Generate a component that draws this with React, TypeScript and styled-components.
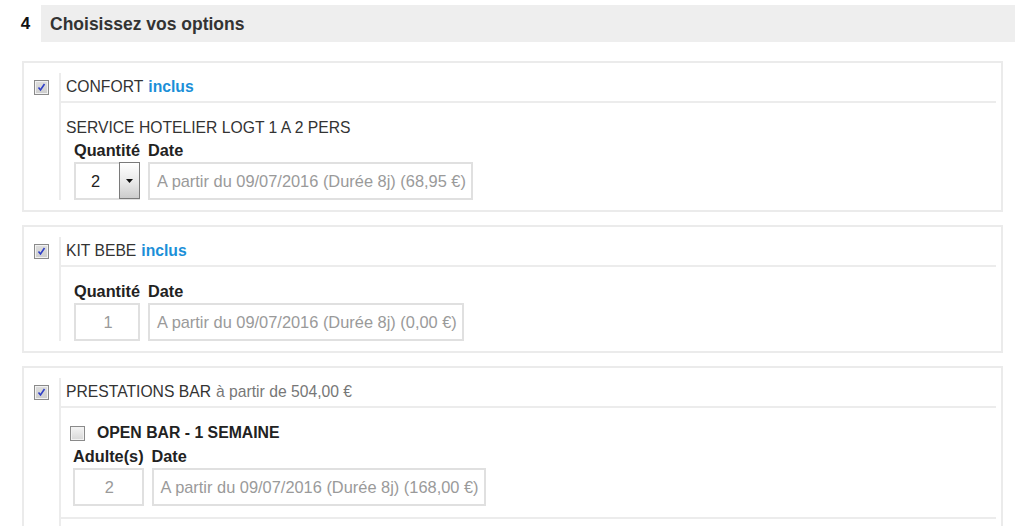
import styled, { createGlobalStyle } from "styled-components";

const Global = createGlobalStyle`
  html, body { margin: 0; padding: 0; background: #fff; overflow: hidden; }
  body { font-family: "Liberation Sans", Arial, sans-serif; color: #333; }
`;

const Page = styled.div`
  padding: 5px 9px 0 10px;
`;

const StepHeader = styled.div`
  display: flex;
  align-items: stretch;
  height: 37px;
  background: #eeeeee;
`;

const StepNum = styled.div`
  width: 31px;
  background: #fff;
  display: flex;
  align-items: center;
  justify-content: center;
  font-weight: bold;
  font-size: 17px;
  color: #111;
  padding-top: 1px;
`;

const StepTitle = styled.div`
  display: flex;
  align-items: center;
  padding: 1px 0 0 9px;
  font-weight: bold;
  font-size: 17.5px;
  color: #333;
`;

const Options = styled.div`
  display: flex;
  flex-direction: column;
  gap: 13px;
  padding: 19px 12px 0;
`;

const Card = styled.div`
  display: flex;
  border: 2px solid #ebebeb;
  padding: 10px 5px 10px 10px;
`;

const CheckCol = styled.div`
  width: 25px;
  flex: none;
  padding-top: 6px;
`;

const Content = styled.div`
  flex: 1;
  border-left: 2px solid #ececec;
`;

const TitleRow = styled.div`
  height: 28px;
  display: flex;
  align-items: center;
  padding-left: 5px;
  border-bottom: 2px solid #ececec;
  font-size: 15.7px;
  color: #333;
`;

const Incl = styled.span`
  color: #1b8fd8;
  font-weight: bold;
  margin-left: 5px;
`;

const FromPrice = styled.span`
  color: #777;
  margin-left: 5px;
`;

const Body = styled.div<{ $top?: number }>`
  padding: ${(p) => p.$top ?? 15}px 0 0 5px;
`;

const SubTitle = styled.div`
  line-height: 20px;
  margin-bottom: 2px;
  font-size: 15.7px;
  color: #333;
`;

const SubOption = styled.div`
  margin: 0 0 12px -5px;
  padding: 0 0 11px 9px;
  border-bottom: 2px solid #ececec;
`;

const SubHead = styled.div`
  display: flex;
  align-items: center;
  gap: 12px;
  height: 20px;
  margin-bottom: 3px;
  font-weight: bold;
  font-size: 15.8px;
  color: #222;
`;

const Fields = styled.div<{ $indent: number }>`
  display: grid;
  grid-template-columns: auto auto;
  justify-content: start;
  column-gap: 8px;
  row-gap: 2px;
  padding-left: ${(p) => p.$indent}px;
`;

const Label = styled.div`
  line-height: 20px;
  font-weight: bold;
  font-size: 16.3px;
  color: #222;
`;

const Field = styled.div<{ $center?: boolean }>`
  height: 38px;
  box-sizing: border-box;
  border: 2px solid #e0e0e0;
  display: flex;
  align-items: center;
  justify-content: ${(p) => (p.$center ? "center" : "flex-start")};
  padding: 0 5px 0 7px;
  font-size: 16.4px;
  color: #9a9a9a;
  white-space: nowrap;
`;

const Select = styled.div`
  height: 38px;
  box-sizing: border-box;
  border: 2px solid #e0e0e0;
  display: flex;
`;

const SelectValue = styled.div`
  flex: 1;
  display: flex;
  align-items: center;
  justify-content: center;
  font-size: 16.4px;
  color: #222;
  padding-right: 4px;
`;

const SelectArrow = styled.div`
  width: 19px;
  border: 1px solid #7a7a7a;
  margin: -2px -2px -1px 0;
  background: linear-gradient(#ffffff, #e8e8e8 55%, #cccccc);
  display: flex;
  align-items: center;
  justify-content: center;
`;

const Box = styled.span<{ $checked?: boolean }>`
  flex: none;
  display: inline-flex;
  align-items: center;
  justify-content: center;
  width: 13px;
  height: 13px;
  border: 1px solid #8a8a8a;
  background: ${(p) =>
    p.$checked ? "linear-gradient(#dedede, #cdcdcd)" : "linear-gradient(#f4f4f4, #d8d8d8)"};
  box-shadow: inset 0 0 0 1px #f2f2f2;
`;

function Check({ checked }: { checked?: boolean }) {
  return (
    <Box $checked={checked}>
      {checked && (
        <svg width="11" height="11" viewBox="0 0 11 11">
          <path d="M2.5 5.5 L4.5 8 L8.5 2" fill="none" stroke="#2f3fc8" strokeWidth="1.6" />
        </svg>
      )}
    </Box>
  );
}

function Arrow() {
  return (
    <svg width="7" height="4" viewBox="0 0 7 4">
      <path d="M0 0 H7 L3.5 4 Z" fill="#111" />
    </svg>
  );
}

export default function App() {
  return (
    <Page>
      <Global />
      <StepHeader>
        <StepNum>4</StepNum>
        <StepTitle>Choisissez vos options</StepTitle>
      </StepHeader>
      <Options>
        <Card>
          <CheckCol>
            <Check checked />
          </CheckCol>
          <Content>
            <TitleRow>
              CONFORT<Incl>inclus</Incl>
            </TitleRow>
            <Body>
              <SubTitle>SERVICE HOTELIER LOGT 1 A 2 PERS</SubTitle>
              <Fields $indent={8}>
                <Label>Quantité</Label>
                <Label>Date</Label>
                <Select>
                  <SelectValue>2</SelectValue>
                  <SelectArrow>
                    <Arrow />
                  </SelectArrow>
                </Select>
                <Field>A partir du 09/07/2016 (Durée 8j) (68,95 €)</Field>
              </Fields>
            </Body>
          </Content>
        </Card>

        <Card>
          <CheckCol>
            <Check checked />
          </CheckCol>
          <Content>
            <TitleRow>
              KIT BEBE<Incl>inclus</Incl>
            </TitleRow>
            <Body $top={14}>
              <Fields $indent={8}>
                <Label>Quantité</Label>
                <Label>Date</Label>
                <Field $center>1</Field>
                <Field>A partir du 09/07/2016 (Durée 8j) (0,00 €)</Field>
              </Fields>
            </Body>
          </Content>
        </Card>

        <Card>
          <CheckCol>
            <Check checked />
          </CheckCol>
          <Content>
            <TitleRow>
              PRESTATIONS BAR<FromPrice>à partir de 504,00 €</FromPrice>
            </TitleRow>
            <Body>
              <SubOption>
                <SubHead>
                  <Check />
                  OPEN BAR - 1 SEMAINE
                </SubHead>
                <Fields $indent={3}>
                  <Label>Adulte(s)</Label>
                  <Label>Date</Label>
                  <Field $center>2</Field>
                  <Field>A partir du 09/07/2016 (Durée 8j) (168,00 €)</Field>
                </Fields>
              </SubOption>
            </Body>
          </Content>
        </Card>
      </Options>
    </Page>
  );
}
